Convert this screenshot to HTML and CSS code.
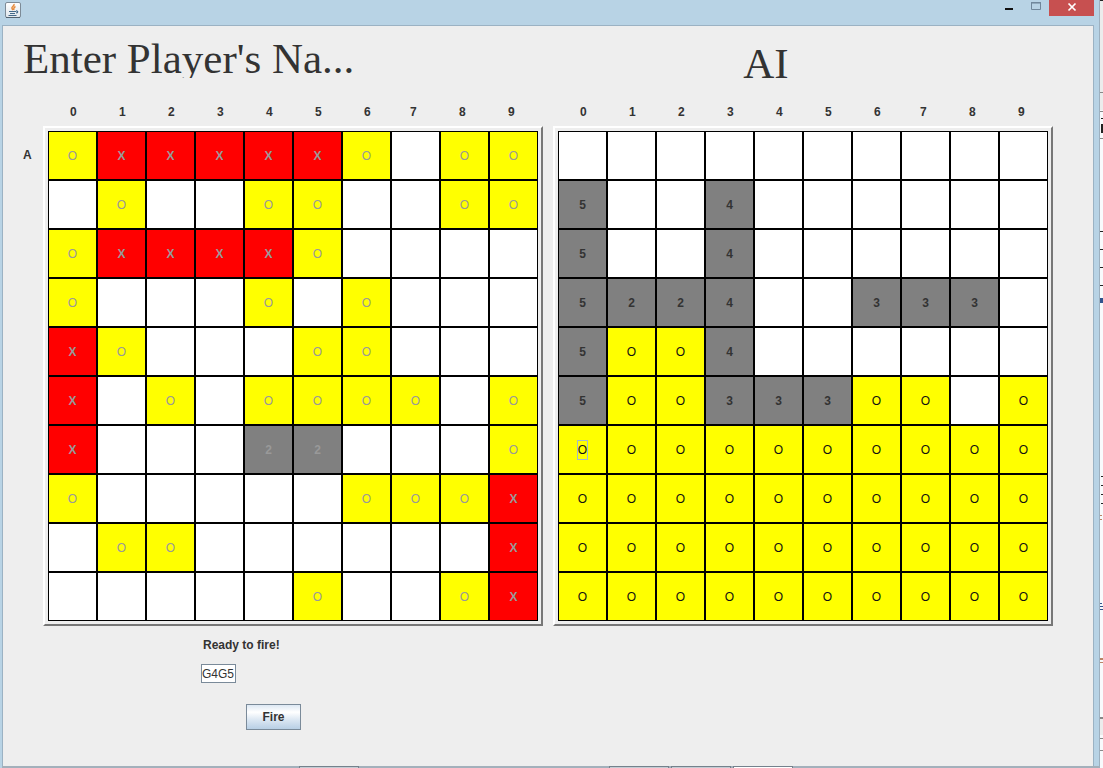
FILE: index.html
```html
<!DOCTYPE html>
<html lang="en">
<head>
<meta charset="utf-8">
<title>Battleship</title>
<link rel="stylesheet" href="styles.css">
</head>
<body>
<div class="screen">
  <div class="window">
    <header class="titlebar">
      <svg class="java" viewBox="0 0 16 16" width="16" height="16" aria-hidden="true">
        <defs><linearGradient id="tile" x2="0" y2="1"><stop offset="0" stop-color="#fff"/><stop offset="1" stop-color="#dfe6ec"/></linearGradient></defs>
        <rect x=".5" y=".5" width="15" height="15" rx="1.5" fill="url(#tile)" stroke="#7d8b97"/>
        <path d="M1 15.5h14" stroke="#52616d"/>
        <path d="M9 2c1 2-3 2.500-2 4.500L8 8M10.500 4.500C8 5.500 9 6.500 8.700 8" fill="none" stroke="#e58a3c" stroke-width="1.500"/>
        <path d="M4 9.500h7M5 11.500h5M3.500 13.500h8M11 9c2.500-.3 2 2 0 2" fill="none" stroke="#456a89" stroke-width="1.200"/>
      </svg>
      <div class="controls">
        <button class="ctl" aria-label="Minimize"><svg width="10" height="12" viewBox="0 0 10 12"><path d="M1 7h8" stroke="#111" stroke-width="2"/></svg></button>
        <button class="ctl" aria-label="Maximize" disabled><svg width="10" height="12" viewBox="0 0 10 12"><path d="M.5 .5v7h9v-7z" fill="none" stroke="#70879b"/><path d="M0 .8h10" stroke="#70879b" stroke-width="1.500"/></svg></button>
        <button class="ctl close" aria-label="Close"><svg width="10" height="12" viewBox="0 0 10 12"><path d="M1.500 1.500l7 7m0-7l-7 7" stroke="#fff" stroke-width="1.700"/></svg></button>
      </div>
    </header>
    <main class="content">
      <div class="boards">
        <h1 class="name">Enter Player's Na...</h1>
        <h1 class="name ai">AI</h1>
        <div class="cols"></div>
        <div class="cols"></div>
        <div class="row-label">A</div>
        <div class="board" id="player"></div>
        <div class="board" id="enemy"></div>
      </div>
      <form class="orders">
        <label for="target">Ready to fire!</label>
        <input id="target" type="text" value="G4G5">
        <button class="fire" type="button">Fire</button>
      </form>
    </main>
    <footer class="edge"><i></i><i></i><i></i><i class="lit"></i></footer>
  </div>
  <svg class="behind" viewBox="0 0 3 768" aria-hidden="true">
    <path fill="#ececec" d="M0 0h3v110H0zM0 717h3v18H0z"/>
    <path fill="#888" d="M0 92h3v1H0zM0 111h3v1H0zM0 138h3v1H0zM0 717h3v2H0zM0 738h3v1H0zM0 750h3v1H0z"/>
    <path fill="#222" d="M0 0h3v1H0zM1 118h2v1H1zM1 124h2v9H1zM0 231h3v1H0zM0 249h3v1H0zM0 267h3v1H0zM0 285h3v1H0zM1 476h2v1H1zM1 485h2v1H1zM1 494h2v1H1zM1 503h2v1H1z"/>
    <path fill="#31538d" d="M0 298h3v5H0zM0 603h2v1H0zM0 606h3v1H0zM0 609h3v1H0z"/>
    <path fill="#b98467" d="M0 515h2v1H0zM0 519h2v1H0zM0 658h3v2H0zM0 662h3v1H0z"/>
  </svg>
</div>
<script src="script.js"></script>
</body>
</html>
```
FILE: styles.css
```css
* { box-sizing: border-box; }

body {
  margin: 0;
  background: #b8d3e5;
  color: #333;
  font: bold 12px/16px "Liberation Sans", Arial, sans-serif;
}

button, input { font: inherit; color: inherit; margin: 0; }

.screen { display: flex; min-height: 100vh; }
.window { flex: 1; display: flex; flex-direction: column; padding-left: 2px; }
.behind { width: 3px; height: 768px; background: #f8fafc; box-shadow: -1px 0 #9db0bf; }

.titlebar { display: flex; justify-content: space-between; height: 25px; padding: 2px 6px 0 3px; }
.controls { display: flex; height: 16px; margin-top: -2px; }
.ctl {
  display: flex;
  align-items: center;
  justify-content: center;
  width: 27px;
  padding: 0;
  border: 0;
  background: none;
}
.close { width: 45px; background: #c75050; }

.content {
  flex: 1;
  margin-right: 6px;
  padding: 0 0 36px 20px;
  border: 1px solid #9bb2c3;
  border-bottom: 0;
  background: #eee;
}

.boards {
  display: grid;
  grid-template-columns: 10px 500px 500px;
  grid-template-rows: 70px 30px auto;
  column-gap: 10px;
}
.name {
  grid-column: 1 / 3;
  height: 52px;
  margin: 0;
  overflow: hidden;
  font: 43px/66px "Liberation Serif", "Times New Roman", serif;
  white-space: nowrap;
}
.ai {
  grid-column: 3;
  height: 70px;
  padding-right: 74px;
  line-height: 76px;
  text-align: center;
}

.cols {
  grid-column: 2;
  display: grid;
  grid-template-columns: repeat(6, 49px) 46px repeat(3, 49px);
  padding: 8px 0 0 27px;
}
.cols + .cols { grid-column: 3; }
.row-label { padding-top: 21px; }

.board {
  display: grid;
  grid-template-columns: repeat(10, 1fr);
  padding: 3px;
  border: 2px solid;
  border-color: #fff #777 #777 #fff;
}
.cell {
  height: 49px;
  padding: 0;
  border: 1px solid #000;
  background: #fff;
}
.cell:disabled { color: #999; }
.miss { background: #ff0; color: #111; font-weight: normal; }
.hit { background: #f00; }
.ship { background: #808080; }
.focus { padding: 2px 0; outline: 1px solid #a3b8cc; }

.orders {
  display: flex;
  flex-direction: column;
  align-items: flex-start;
  padding: 11px 0 0 178px;
}
.orders label { padding-left: 2px; }
.orders input {
  width: 35px;
  height: 19px;
  margin-top: 11px;
  padding: 0;
  border: 1px solid #7a8a99;
  background: #fff;
  font-weight: normal;
}
.fire {
  width: 55px;
  height: 26px;
  margin: 21px 0 0 45px;
  padding: 0;
  border: 1px solid #7a8a99;
  background: linear-gradient(#dde8f3, #fff 30%, #dde8f3 60%, #b8cfe5);
}

.edge { display: flex; height: 2px; padding-left: 297px; background: #a3b0bb; }
.edge i { width: 60px; height: 2px; border: 1px solid #74818c; border-bottom: 0; background: #c3ccd3; }
.edge i + i { margin-left: 250px; }
.edge i + i + i { margin-left: 2px; }
.edge .lit { background: #fff; }
```
FILE: script.js
```js
const boards = {
  player: [
    "OXXXXXO.OO",
    ".O..OO..OO",
    "OXXXXO....",
    "O...O.O...",
    "XO...OO...",
    "X.O.OOOO.O",
    "X...22...O",
    "O.....OOOX",
    ".OO......X",
    ".....O..OX"
  ],
  enemy: [
    "..........",
    "5..4......",
    "5..4......",
    "5224..333.",
    "5OO4......",
    "5OO333OO.O",
    "OOOOOOOOOO",
    "OOOOOOOOOO",
    "OOOOOOOOOO",
    "OOOOOOOOOO"
  ]
};
const kinds = { O: "miss", X: "hit", ".": "sea" };

for (const [id, rows] of Object.entries(boards)) {
  const board = document.getElementById(id);
  rows.forEach((row, r) => [...row].forEach((mark, c) => {
    const cell = document.createElement("button");
    cell.className = "cell " + (kinds[mark] || "ship");
    cell.disabled = id === "player";
    cell.setAttribute("aria-label", `${"ABCDEFGHIJ"[r]}${c}`);
    if (mark !== ".") {
      const text = document.createElement("span");
      text.textContent = mark;
      if (id === "enemy" && r === 6 && c === 0) text.className = "focus";
      cell.append(text);
    }
    board.append(cell);
  }));
}

for (const cols of document.querySelectorAll(".cols")) {
  for (let n = 0; n < 10; n++) {
    const label = document.createElement("span");
    label.textContent = n;
    cols.append(label);
  }
}
```
